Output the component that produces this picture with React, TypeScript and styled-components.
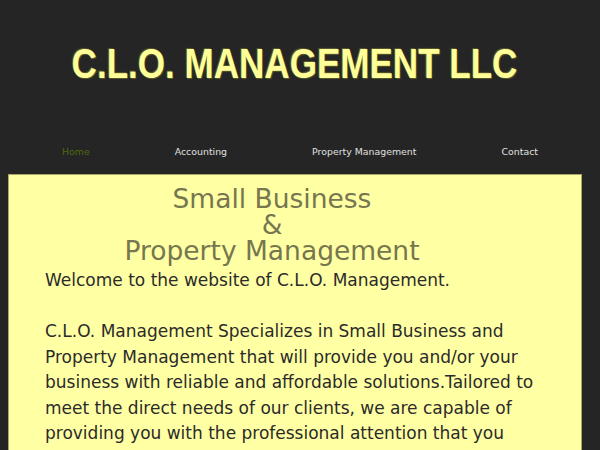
import styled, { createGlobalStyle } from "styled-components";

const GlobalStyle = createGlobalStyle`
  html, body {
    margin: 0;
    padding: 0;
    background: #252525;
  }
  body {
    font-family: "DejaVu Sans", sans-serif;
  }
`;

const Page = styled.div`
  width: 600px;
  height: 450px;
  overflow: hidden;
  background: #252525;
`;

const Header = styled.header`
  height: 129px;
  display: flex;
  justify-content: center;
  align-items: flex-start;
  padding: 42px 10px 0 0;
  box-sizing: border-box;
`;

const Title = styled.h1`
  margin: 0;
  display: inline-block;
  font-family: "Liberation Sans", Arial, sans-serif;
  font-weight: bold;
  font-size: 43px;
  line-height: 1;
  white-space: nowrap;
  color: #ffff99;
  transform: scaleX(0.815);
  text-shadow: 1px 1px 1px #5a5a2a, -1px -1px 1px #5a5a2a;
`;

const Nav = styled.nav`
  height: 45px;
  display: flex;
  justify-content: center;
  align-items: center;
  gap: 85px;
  padding-bottom: 1px;
  box-sizing: border-box;
`;

const NavItem = styled.a<{ $active?: boolean }>`
  font-family: "DejaVu Sans", sans-serif;
  font-size: 9.4px;
  color: ${(p) => (p.$active ? "#4e6a12" : "#e0e0e0")};
  text-decoration: none;
  cursor: pointer;
`;

const Panel = styled.main`
  margin-left: 8px;
  width: 574px;
  box-sizing: border-box;
  min-height: 300px;
  background: #ffffa3;
  border: 1px solid #a8a868;
  padding: 11px 36px 0 36px;
`;

const Heading = styled.h2`
  margin: 0 46px 0 0;
  text-align: center;
  font-weight: normal;
  font-size: 26.5px;
  line-height: 26px;
  color: #76764f;
`;

const Body = styled.p`
  margin: 4px 0 0 0;
  font-size: 17px;
  line-height: 25.5px;
  color: #2b2b2b;
`;

export default function App() {
  return (
    <Page>
      <GlobalStyle />
      <Header>
        <Title>C.L.O. MANAGEMENT LLC</Title>
      </Header>
      <Nav>
        <NavItem $active>Home</NavItem>
        <NavItem>Accounting</NavItem>
        <NavItem>Property Management</NavItem>
        <NavItem>Contact</NavItem>
      </Nav>
      <Panel>
        <Heading>
          Small Business
          <br />&amp;
          <br />
          Property Management
        </Heading>
        <Body>
          Welcome to the website of C.L.O. Management.
          <br />
          <br />
          C.L.O. Management Specializes in Small Business and Property
          Management that will provide you and/or your business with reliable
          and affordable solutions.Tailored to meet the direct needs of our
          clients, we are capable of providing you with the professional
          attention that you deserve.
        </Body>
      </Panel>
    </Page>
  );
}
